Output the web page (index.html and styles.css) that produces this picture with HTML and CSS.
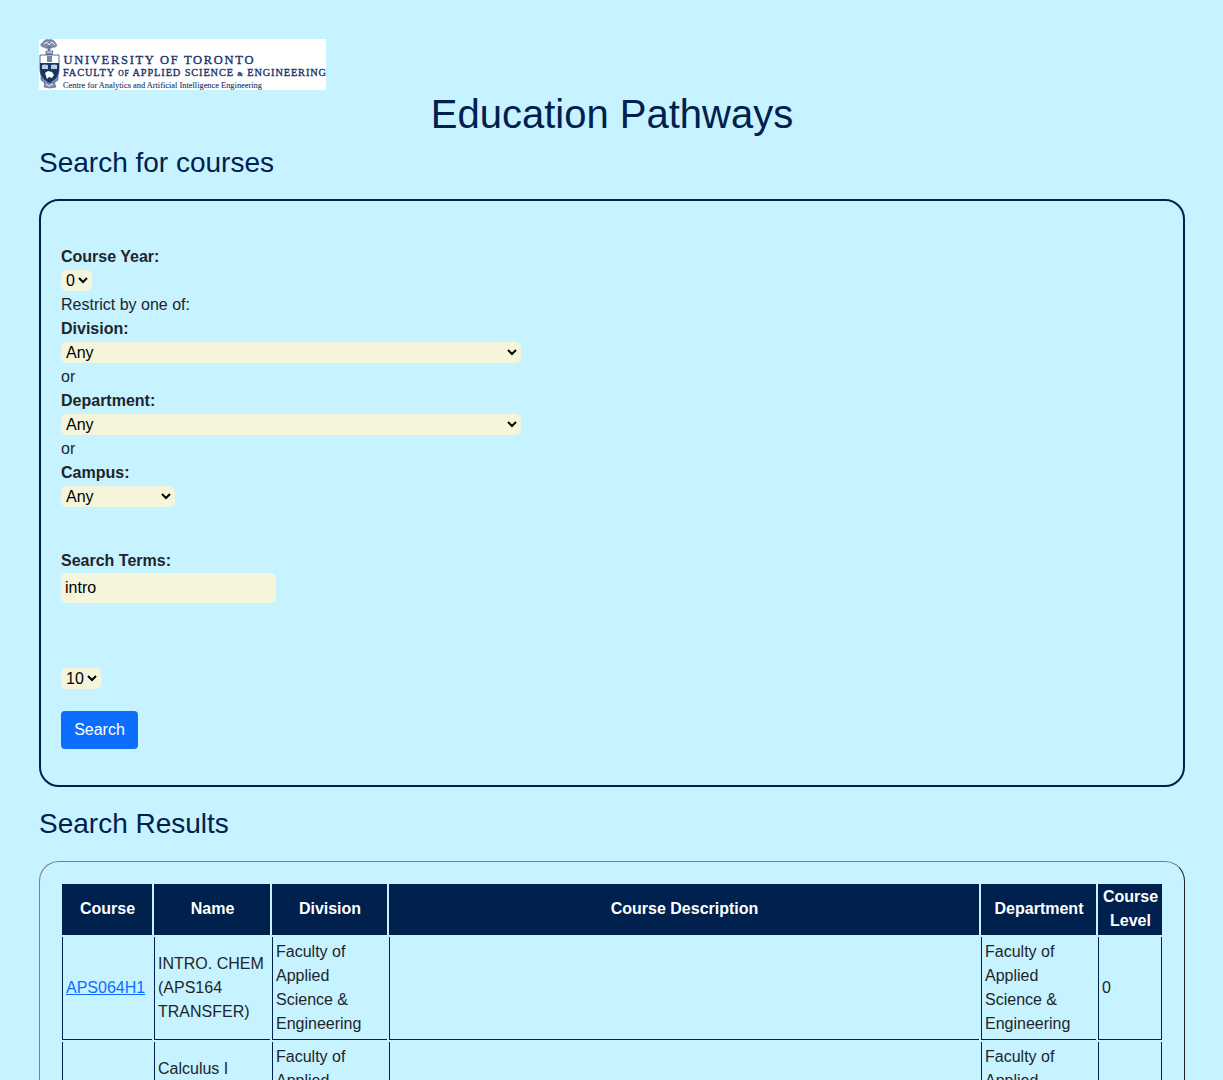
FILE: index.html
```
<!DOCTYPE html>
<html lang="en">
<head>
<meta charset="utf-8">
<title>Education Pathways</title>
<link rel="stylesheet" href="styles.css">
</head>
<body>
<header>
<svg class="logo" viewBox="0 0 287 51" role="img" aria-label="University of Toronto">
  <rect width="287" height="51" fill="#fff"/>
  <g fill="#8290ad" stroke="#53668d" stroke-width=".7">
    <path d="M9 12V7h2v5zM5 8C1 8 1 4 4 4c0-3 4-4 6-3 3-1 6 1 6 3 3 1 2 5-2 4-2 2-3 1-4 0-1 1-3 2-5 0z"/>
    <path d="M7 12h7l-1 4H7zM2 18l3-1 1 27-4-3zm17 0-3-1-1 27 4-3zM6 43h9l2 5-6 1-6-1z"/>
  </g>
  <g fill="none" stroke="#fff" stroke-width=".8"><path d="M5 5l3-2 2 3 3-3 3 3M8 13h5M7 45l3 2 4-2"/></g>
  <path d="M1 16h19v14c0 7-4 11-9.500 14C5 41 1 37 1 30z" fill="#fff" stroke="#29477a" stroke-width=".8"/>
  <path d="M1 24h19v6c0 7-4 11-9.500 14C5 41 1 37 1 30z" fill="#183768"/>
  <path d="M3 26l3-.5 3 .5v4H3zm9 0 3-.5 3 .5v4h-6z" fill="#c3ccdc"/>
  <path d="M6 34l3-2 4 1 2 3-2 3-3-1-2 2-1-3z" fill="#fff"/>
  <path d="M8 17h5v6H8z" fill="#7688aa"/>
  <g class="logo-text">
    <text x="24.5" y="25" font-size="12.5" textLength="190" lengthAdjust="spacing">UNIVERSITY OF TORONTO</text>
    <text x="24" y="37.3" font-size="10.3" textLength="263" lengthAdjust="spacing">FACULTY <tspan font-size="7.5">OF</tspan> APPLIED SCIENCE <tspan font-size="7">&amp;</tspan> ENGINEERING</text>
    <text class="logo-centre" x="24" y="49" font-size="9" textLength="199" lengthAdjust="spacingAndGlyphs">Centre for Analytics and Artificial Intelligence Engineering</text>
  </g>
</svg>
<h1>Education Pathways</h1>
</header>
<h2>Search for courses</h2>
<form class="search">
  <label for="year">Course Year:</label>
  <div class="line"><select id="year" class="year"><option>0</option></select></div>
  <div class="line">Restrict by one of:</div>
  <label for="division">Division:</label>
  <div class="line"><select id="division" class="wide"><option>Any</option></select></div>
  <div class="line">or</div>
  <label for="department">Department:</label>
  <div class="line"><select id="department" class="wide"><option>Any</option></select></div>
  <div class="line">or</div>
  <label for="campus">Campus:</label>
  <div class="line"><select id="campus" class="campus"><option>Any</option></select></div>
  <label class="terms-label" for="terms">Search Terms:</label>
  <input id="terms" type="text" value="intro">
  <div class="line count-line"><select class="count" aria-label="Results"><option>10</option></select></div>
  <button type="button">Search</button>
</form>
<h2 class="results-title">Search Results</h2>
<table>
  <colgroup><col class="c-course"><col class="c-name"><col class="c-division"><col><col class="c-department"><col class="c-level"></colgroup>
  <thead>
    <tr><th>Course</th><th>Name</th><th>Division</th><th>Course Description</th><th>Department</th><th>Course Level</th></tr>
  </thead>
  <tbody>
    <tr><td><a href="#">APS064H1</a></td><td>INTRO. CHEM (APS164 TRANSFER)</td><td>Faculty of Applied Science &amp; Engineering</td><td></td><td>Faculty of Applied Science &amp; Engineering</td><td>0</td></tr>
    <tr><td><a href="#">APS063H1</a></td><td>Calculus I<br>(APS163<br>TRANSFER)</td><td>Faculty of Applied Science &amp; Engineering</td><td></td><td>Faculty of Applied Science &amp; Engineering</td><td>0</td></tr>
  </tbody>
</table>
</body>
</html>
```
FILE: styles.css
```
* { box-sizing: border-box; }
html { overflow: hidden; }
body {
  height: 1080px;
  margin: 0;
  padding: 39px 38px 0 39px;
  overflow: hidden;
  background: #c7f2ff;
  color: #212529;
  font: 16px/24px "Liberation Sans", Arial, sans-serif;
}
.logo { display: block; width: 287px; height: 51px; }
.logo-text {
  fill: #17356a;
  stroke: #17356a;
  stroke-width: .35px;
  font-family: "Liberation Serif", "Times New Roman", serif;
}
.logo-centre { stroke-width: .1px; }
h1, h2 { margin: 0; color: #00204e; font-weight: 500; }
h1 { font-size: 40px; line-height: 48px; text-align: center; }
h2 { margin-top: 8px; font-size: 28px; line-height: 34px; }
.search {
  display: flex;
  flex-direction: column;
  align-items: flex-start;
  height: 588px;
  margin-top: 19px;
  padding: 44px 20px 20px;
  border: 2px solid #00204e;
  border-radius: 20px;
}
label { font-weight: 700; }
.line { display: flex; align-items: flex-start; height: 24px; padding-top: 1px; }
.line:not(:has(select)) { padding-top: 0; }
select, input {
  margin: 0;
  border: 0;
  border-radius: 5px;
  background-color: beige;
  color: #000;
  font: 16px "Liberation Sans", Arial, sans-serif;
}
select { height: 21px; padding: 0; border: 1px solid beige; }
.year { width: 31px; }
.wide { width: 460px; }
.campus { width: 114px; }
.count { width: 40px; }
.terms-label { margin-top: 40px; }
input { width: 215px; height: 30px; padding: 1px 4px; }
.count-line { margin-top: 64px; }
button {
  width: 77px;
  height: 38px;
  margin-top: 20px;
  padding: 0;
  border: 0;
  border-radius: 4px;
  background: #0d6efd;
  color: #fff;
  font: inherit;
}
.results-title { margin-top: 20px; }
table {
  width: 1146px;
  margin-top: 20px;
  padding: 20px;
  table-layout: fixed;
  border: 1px solid;
  border-color: #808080 #212529 #212529 #808080;
  border-radius: 20px;
  border-collapse: separate;
  border-spacing: 2px;
}
.c-course { width: 90px; }
.c-name { width: 116px; }
.c-division, .c-department { width: 115px; }
.c-level { width: 64px; }
th {
  padding: 1px;
  border-left: 1px solid #00204e;
  border-bottom: 1px solid #00204e;
  background: #00204e;
  color: #fff;
  text-align: center;
}
td {
  padding: 3px;
  border-left: 1px solid #00204e;
  border-bottom: 1px solid #00204e;
  vertical-align: middle;
}
td:last-child { border-right: 1px solid #00204e; }
a { color: #0d6efd; }
```
